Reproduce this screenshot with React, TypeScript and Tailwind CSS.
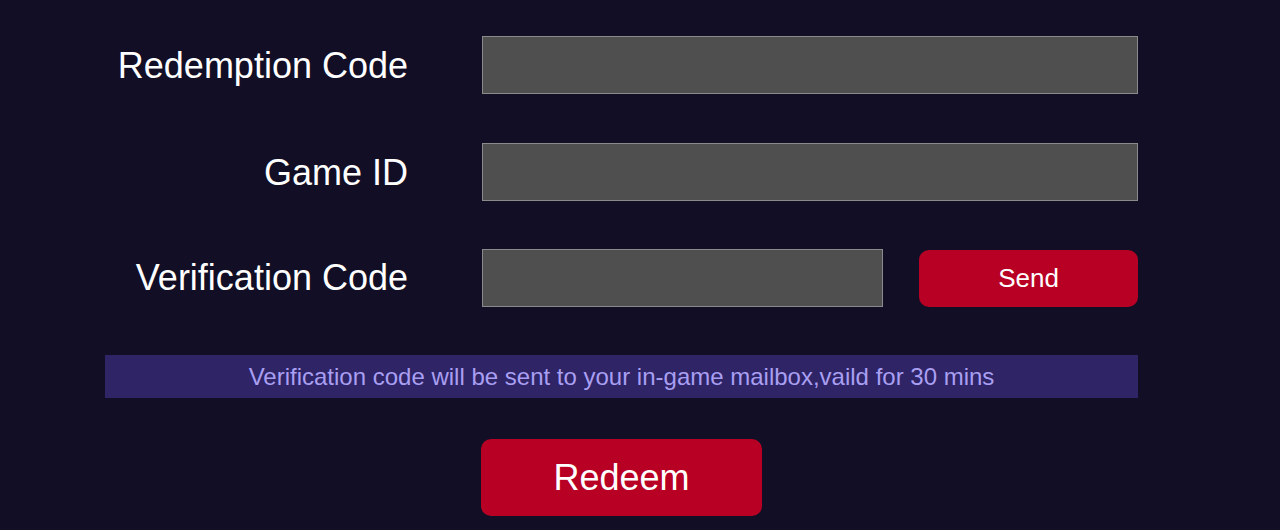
export default function App() {
  const font = { fontFamily: '"Liberation Sans", Arial, sans-serif' };
  return (
    <div className="min-h-[530px] w-full bg-[#110e25] text-white" style={font}>
      <div className="ml-[105px] w-[1033px] pt-[36px] flex flex-col">
        {/* Redemption Code */}
        <div className="flex items-center h-[58px]">
          <label className="w-[303px] text-right text-[36px] leading-none text-white pt-[2px]">Redemption Code</label>
          <input className="ml-[74px] flex-1 h-[58px] bg-[#4f4f4f] border border-[#8a8a8a] outline-none px-3 text-white" />
        </div>

        {/* Game ID */}
        <div className="flex items-center h-[58px] mt-[49px]">
          <label className="w-[303px] text-right text-[36px] leading-none text-white pt-[2px]">Game ID</label>
          <input className="ml-[74px] flex-1 h-[58px] bg-[#4f4f4f] border border-[#8a8a8a] outline-none px-3 text-white" />
        </div>

        {/* Verification Code */}
        <div className="flex items-center h-[58px] mt-[48px]">
          <label className="w-[303px] text-right text-[36px] leading-none text-white">Verification Code</label>
          <input className="ml-[74px] w-[401px] h-[58px] bg-[#4f4f4f] border border-[#8a8a8a] outline-none px-3 text-white" />
          <button className="ml-[36px] w-[219px] h-[57px] rounded-[10px] bg-[#b80024] text-[26px] text-white">Send</button>
        </div>

        {/* Notice */}
        <div className="mt-[48px] h-[43px] bg-[#2e2466] flex items-center justify-center text-[24px] text-[#a99ff2]">
          Verification code will be sent to your in-game mailbox,vaild for 30 mins
        </div>

        {/* Redeem */}
        <div className="mt-[41px] flex justify-center">
          <button className="w-[281px] h-[77px] rounded-[10px] bg-[#b80024] text-[36px] text-white">Redeem</button>
        </div>
      </div>
    </div>
  );
}
